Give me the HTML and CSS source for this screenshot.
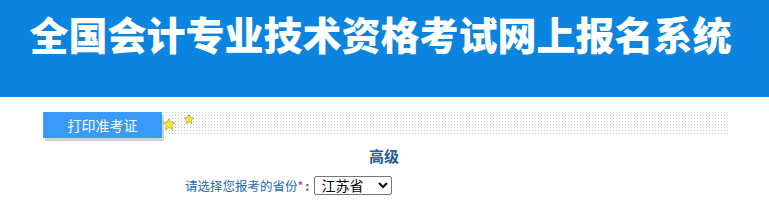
FILE: index.html
```html
<!DOCTYPE html>
<html lang="zh-CN">
<head>
<meta charset="utf-8">
<title>全国会计专业技术资格考试网上报名系统</title>
<link rel="stylesheet" href="styles.css">
</head>
<body>
<header class="banner">
  <h1 class="banner-title">全国会计专业技术资格考试网上报名系统</h1>
</header>
<main class="main">
  <div class="tabbar">
    <div class="tab">打印准考证</div>
    <div class="dots">
      <svg class="dots-svg" width="100%" height="23" xmlns="http://www.w3.org/2000/svg">
        <defs>
          <pattern id="dp" x="0" y="0" width="3" height="3" patternUnits="userSpaceOnUse">
            <rect x="1" y="0" width="1" height="1" fill="#c8c8c8"/>
          </pattern>
        </defs>
        <rect x="0" y="0" width="100%" height="23" fill="url(#dp)"/>
        <polygon points="7,6.5 8.8,10.4 12.9,10.8 9.8,13.6 10.7,17.7 7,15.6 3.3,17.7 4.2,13.6 1.1,10.8 5.2,10.4" fill="#f5e640" stroke="#b9a92a" stroke-width="0.8" stroke-linejoin="round"/>
        <polygon points="27,2.5 28.5,5.6 31.8,6 29.4,8.3 30,11.6 27,10 24,11.6 24.6,8.3 22.2,6 25.5,5.6" fill="#f5e640" stroke="#b9a92a" stroke-width="0.8" stroke-linejoin="round"/>
      </svg>
    </div>
  </div>
  <h2 class="level">高级</h2>
  <div class="form-row">
    <label class="label" for="prov">请选择您报考的省份<span class="req">*</span><b class="colon">:</b></label>
    <select class="select" id="prov">
      <option>江苏省</option>
    </select>
  </div>
</main>
</body>
</html>
```
FILE: styles.css
```css
html, body {
  margin: 0;
  padding: 0;
  background: #ffffff;
  font-family: "Noto Sans CJK SC", "Liberation Sans", sans-serif;
}
.banner {
  height: 97px;
  background: #0b84e0;
  display: flex;
  justify-content: center;
}
.banner-title {
  margin: 0;
  padding-top: 2px;
  height: 62px;
  line-height: 62px;
  font-size: 39px;
  font-weight: 900;
  color: #ffffff;
  margin-left: -8px;
}
.main {
  padding: 15px 40px 0 43px;
}
.tabbar {
  display: flex;
  align-items: flex-start;
}
.tab {
  width: 119px;
  height: 26px;
  line-height: 26px;
  background: #3a9af7;
  color: #ffffff;
  font-size: 14px;
  text-align: center;
  box-shadow: 2px 3px 0 #d3d3d3;
  flex: none;
}
.dots {
  flex: 1;
  height: 23px;
}
.dots-svg {
  display: block;
}
.level {
  margin: 8px 0 0 0;
  height: 20px;
  line-height: 20px;
  text-align: center;
  font-size: 15px;
  font-weight: 700;
  color: #1b5d99;
  padding-right: 4px;
}
.form-row {
  display: flex;
  align-items: center;
  padding-left: 142px;
  margin-top: 9px;
  height: 20px;
}
.label {
  font-size: 12.5px;
  color: #1a68b0;
  margin-right: 5px;
}
.req {
  color: #e02020;
}
.colon {
  margin-left: 2px;
  font-weight: 700;
}
.select {
  width: 78px;
  height: 19px;
  font-size: 14px;
  font-family: "Liberation Sans", "Noto Sans CJK SC", sans-serif;
  padding: 0 0 0 2px;
  border: 1px solid #767676;
  border-radius: 2px;
  background: #fff;
  color: #000;
}
```
